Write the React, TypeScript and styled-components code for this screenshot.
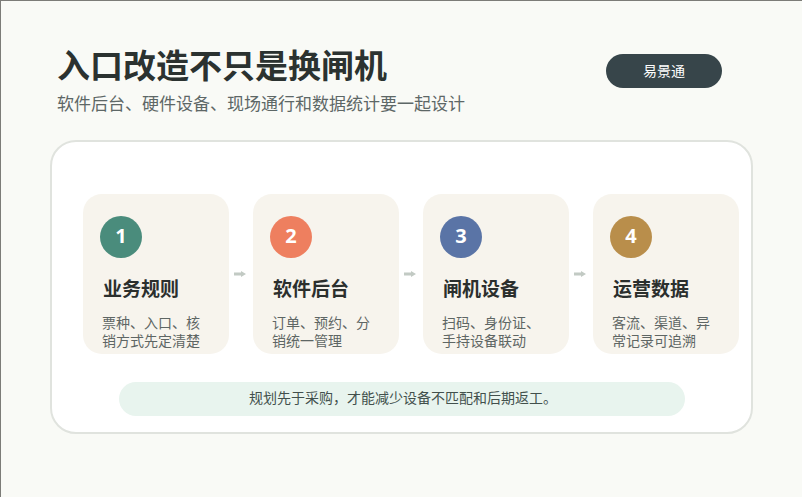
import styled, { createGlobalStyle } from 'styled-components';

const steps = [
  { num: 1, color: '#4a8c7c', title: '业务规则', desc: '票种、入口、核销方式先定清楚' },
  { num: 2, color: '#ee7f5f', title: '软件后台', desc: '订单、预约、分销统一管理' },
  { num: 3, color: '#5a74a6', title: '闸机设备', desc: '扫码、身份证、手持设备联动' },
  { num: 4, color: '#b98e4b', title: '运营数据', desc: '客流、渠道、异常记录可追溯' },
];

export default function App() {
  return (
    <>
      <GlobalStyle />
      <Page>
        <Header>
          <div>
            <Title>入口改造不只是换闸机</Title>
            <Subtitle>软件后台、硬件设备、现场通行和数据统计要一起设计</Subtitle>
          </div>
          <Brand>易景通</Brand>
        </Header>
        <Panel>
          <Steps>
            {steps.map((step, i) => (
              <StepWrap key={step.num}>
                <Card>
                  <Circle $color={step.color}>{step.num}</Circle>
                  <CardTitle>{step.title}</CardTitle>
                  <CardDesc>{step.desc}</CardDesc>
                </Card>
                {i < steps.length - 1 && (
                  <Arrow width="12" height="8" viewBox="0 0 12 8">
                    <path d="M0 2.5h7V1l5 3-5 3V5.5H0z" fill="#c2cac4" />
                  </Arrow>
                )}
              </StepWrap>
            ))}
          </Steps>
          <Note>规划先于采购，才能减少设备不匹配和后期返工。</Note>
        </Panel>
      </Page>
    </>
  );
}

const GlobalStyle = createGlobalStyle`
  html, body {
    margin: 0;
    padding: 0;
  }
  body {
    font-family: "Noto Sans CJK SC", "Noto Sans", sans-serif;
  }
`;

const Page = styled.div`
  box-sizing: border-box;
  width: 802px;
  height: 497px;
  overflow: hidden;
  background: #f9faf6;
  border-top: 1px solid #7c7c78;
  border-left: 1px solid #7c7c78;
  padding: 43px 49px 0 49px;
`;

const Header = styled.header`
  display: flex;
  justify-content: space-between;
  align-items: flex-start;
  padding: 0 31px 0 7px;
  height: 96px;
`;

const Title = styled.h1`
  margin: 0;
  font-size: 33px;
  line-height: 40px;
  font-weight: 700;
  color: #2b3230;
`;

const Subtitle = styled.p`
  margin: 7px 0 0;
  font-size: 17px;
  line-height: 24px;
  color: #5d6766;
`;

const Brand = styled.div`
  width: 116px;
  height: 34px;
  margin-top: 10px;
  border-radius: 17px;
  background: #37454a;
  color: #fff;
  font-size: 14px;
  line-height: 32px;
  text-align: center;
`;

const Panel = styled.section`
  box-sizing: border-box;
  width: 703px;
  height: 294px;
  background: #fff;
  border: 2px solid #e0e3de;
  border-radius: 26px;
  padding: 52px 12px 0 31px;
`;

const Steps = styled.div`
  display: flex;
  gap: 24px;
`;

const StepWrap = styled.div`
  position: relative;
`;

const Card = styled.article`
  box-sizing: border-box;
  width: 146px;
  height: 160px;
  overflow: hidden;
  background: #f7f4ed;
  border-radius: 19px;
  padding: 22px 18px 0 17px;
`;

const Circle = styled.div<{ $color: string }>`
  width: 42px;
  height: 42px;
  border-radius: 50%;
  background: ${(props) => props.$color};
  color: #fff;
  font-family: "Open Sans", sans-serif;
  font-size: 20px;
  font-weight: 700;
  line-height: 40px;
  text-align: center;
`;

const CardTitle = styled.h2`
  margin: 17px 0 0 3px;
  font-size: 19px;
  line-height: 26px;
  font-weight: 700;
  color: #2b2f2d;
`;

const CardDesc = styled.p`
  margin: 12px 0 0 2px;
  font-size: 14px;
  line-height: 18px;
  color: #5e6664;
`;

const Arrow = styled.svg`
  position: absolute;
  left: 151px;
  top: 76px;
`;

const Note = styled.div`
  width: 566px;
  height: 34px;
  margin: 28px 0 0 36px;
  padding-left: 2px;
  box-sizing: border-box;
  border-radius: 17px;
  background: #e8f4ee;
  color: #42504c;
  font-size: 14px;
  line-height: 30px;
  text-align: center;
`;
